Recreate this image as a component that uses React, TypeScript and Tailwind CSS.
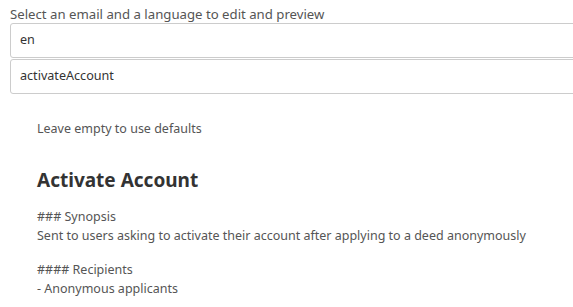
import React from 'react';

const font = { fontFamily: '"Noto Sans", "Open Sans", sans-serif' };

export default function App() {
  return (
    <div className="w-[573px] h-[307px] overflow-hidden bg-white text-[#555]" style={font}>
      <div className="pl-[10px] pt-[5px]">
        <label className="block text-[13.2px] leading-[18px] text-[#555]">
          Select an email and a language to edit and preview
        </label>
        <div className="w-[600px] h-[35px] flex items-center px-[9px] border border-[#ccc] rounded-l-[3px] text-[12.6px] text-[#333]">
          en
        </div>
        <div className="w-[600px] h-[35px] mt-[1px] flex items-center px-[9px] border border-[#ccc] rounded-l-[3px] text-[12.6px] text-[#333]">
          activateAccount
        </div>
      </div>

      <div className="pl-[37px] pt-[26px] text-[12.5px] leading-[18px]">
        <p>Leave empty to use defaults</p>
        <h3 className="mt-[29px] text-[19px] leading-[26px] font-bold text-[#333]">Activate Account</h3>
        <div className="mt-[15px] leading-[18.5px]">
          <p>### Synopsis</p>
          <p>Sent to users asking to activate their account after applying to a deed anonymously</p>
          <p className="mt-[16px]">#### Recipients</p>
          <p>- Anonymous applicants</p>
        </div>
      </div>
    </div>
  );
}
